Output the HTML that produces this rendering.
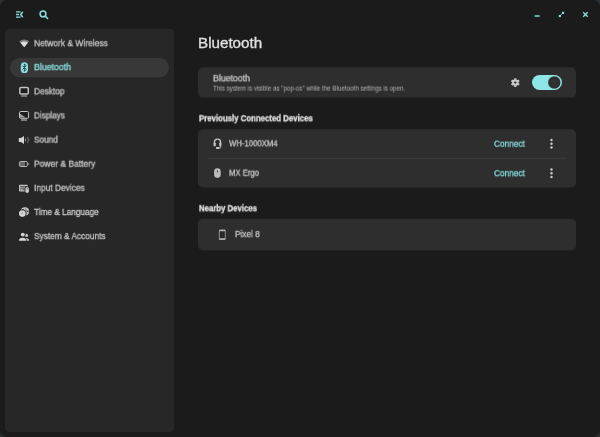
<!DOCTYPE html>
<html lang="en"><head><meta charset="utf-8"><title>Bluetooth - Settings</title>
<style>
html,body{margin:0;padding:0;background:#2c2f31;}
body{width:600px;height:437px;position:relative;overflow:hidden;font-family:"Liberation Sans",sans-serif;}
.t{margin:0;padding:0;border:0;background:none;font-family:inherit;text-decoration:none;display:block;position:absolute;white-space:pre;line-height:1;transform-origin:0 50%;will-change:transform;-webkit-text-stroke:0.3px currentColor;}
.box{position:absolute;}
svg{position:absolute;overflow:visible;}
</style></head><body>
<div class="box" style="left:0;top:0;width:600px;height:437px;background:#1b1b1b;border-radius:7px"></div>
<svg width="600" height="437" viewBox="0 0 600 437" style="left:0;top:0">
<rect x="5" y="28.8" width="169" height="403.1" rx="4.5" fill="#272727"/>
<rect x="10" y="58" width="159" height="19.2" rx="9.6" fill="#383838"/>
<rect x="198" y="67.3" width="378" height="30.3" rx="5" fill="#2e2e2e"/>
<rect x="198" y="129.2" width="378" height="58.2" rx="5" fill="#2e2e2e"/>
<rect x="208" y="157.9" width="358" height="0.8" fill="#414141"/>
<rect x="198" y="218.8" width="378" height="31.4" rx="5" fill="#2e2e2e"/>
<rect x="532" y="75" width="30" height="15" rx="7.5" fill="#8ee6e6"/>
<circle cx="554.3" cy="82.5" r="6.2" fill="#303030"/>
</svg>
<svg width="600" height="437" viewBox="0 0 600 437" style="left:0;top:0">
<!-- header: sidebar toggle -->
<g fill="#8adfe0">
<rect x="16" y="11.2" width="4.6" height="1.4" rx=".4"/>
<rect x="16" y="13.8" width="3.2" height="1.4" rx=".4"/>
<rect x="16" y="16.4" width="4.6" height="1.4" rx=".4"/>
</g>
<path d="M22.5 12.3 L20.7 14.5 L22.5 16.7" fill="none" stroke="#8adfe0" stroke-width="1.4" stroke-linecap="round" stroke-linejoin="round"/>
<!-- search -->
<circle cx="43" cy="13.9" r="2.9" fill="none" stroke="#8adfe0" stroke-width="1.5"/>
<path d="M45.2 16.2 L47.6 18.5" stroke="#8adfe0" stroke-width="1.6" stroke-linecap="round"/>
<!-- window controls -->
<rect x="534.6" y="15.3" width="5.2" height="1.5" rx=".5" fill="#84d6d7"/>
<g fill="#8adfe0"><rect x="558.8" y="15" width="2.1" height="2.1"/><rect x="562" y="11.8" width="2.1" height="2.1"/></g>
<path d="M559.8 16 L563 12.8" stroke="#8adfe0" stroke-width=".9"/>
<path d="M583.2 12.3 L587.7 16.7 M587.7 12.3 L583.2 16.7" stroke="#8adfe0" stroke-width="1.35"/>

<!-- wifi -->
<path d="M24.2 47.2 L19.2 41.3 Q24.2 37.6 29.2 41.3 Z" fill="#7d7d7d"/>
<path d="M24.2 47.2 L20.5 42.8 Q24.2 40.1 27.9 42.8 Z" fill="#dcdcdc"/>
<!-- bluetooth -->
<rect x="20.8" y="62.3" width="7.2" height="10.7" rx="3.6" fill="#8adfe0"/>
<path d="M22.5 65.7 L26.2 69.4 L24.4 71.3 L24.4 63.9 L26.2 65.8 L22.5 69.5" fill="none" stroke="#274546" stroke-width=".9" stroke-linejoin="round"/>
<!-- desktop -->
<rect x="19.8" y="87.5" width="8.5" height="6.5" rx="1.3" fill="#1f1f1f" stroke="#c4c4c4" stroke-width="1.5"/>
<rect x="21.1" y="95.3" width="5.9" height="1.5" rx=".3" fill="#909090"/>
<!-- displays -->
<rect x="19.5" y="111.5" width="9.1" height="6.8" rx="1.3" fill="#1f1f1f" stroke="#c4c4c4" stroke-width="1"/>
<path d="M20 113.8 L25.8 117.6 L20 117.6 Z" fill="#a0a0a0"/>
<rect x="21.1" y="119.2" width="5.9" height="1.5" rx=".3" fill="#9a9a9a"/>
<!-- sound -->
<path d="M18.8 138 L21 138 L24 136 L24 144 L21 142 L18.8 142 Z" fill="#d4d4d4"/>
<path d="M25 138.3 Q26.9 140 25 141.7 Z" fill="#bdbdbd"/>
<path d="M27.2 137.2 Q29.6 140 27.2 142.8" fill="none" stroke="#6f6f6f" stroke-width="1.1"/>
<!-- battery -->
<rect x="19.4" y="161.5" width="7.9" height="5" rx="1.2" fill="#1e1e1e"/>
<rect x="19.9" y="162" width="5.1" height="4" fill="#6a6a6a"/>
<rect x="19.4" y="161.5" width="7.9" height="5" rx="1.2" fill="none" stroke="#bcbcbc" stroke-width="1"/>
<path d="M27.9 162.9 L29.2 164 L27.9 165.1 Z" fill="#c4c4c4"/>
<!-- input devices -->
<rect x="19" y="184.7" width="8.8" height="6.7" rx="1" fill="#c4c4c4"/>
<path d="M20.2 186.6 H27 M20.2 188.2 H25 M20.2 189.8 H21.4 M22.4 189.8 H25" stroke="#303030" stroke-width=".8"/>
<rect x="24.7" y="186.3" width="4.9" height="7.3" rx="2.4" fill="#272727"/>
<rect x="25.4" y="187" width="3.5" height="6" rx="1.75" fill="#c8c8c8"/>
<rect x="26.9" y="187.9" width=".6" height="1.4" fill="#444"/>
<!-- time & language -->
<circle cx="24.9" cy="211.4" r="4.1" fill="#cdcdcd"/>
<ellipse cx="23.3" cy="209.9" rx="1.5" ry=".8" transform="rotate(25 23.3 209.9)" fill="#2a2a2a"/>
<circle cx="27.7" cy="211.4" r=".8" fill="#2a2a2a"/>
<path d="M25.6 208.2 Q26.6 210.5 26 214.5" fill="none" stroke="#4a4a4a" stroke-width=".7"/>
<circle cx="22.3" cy="213.6" r="4.1" fill="#272727"/>
<circle cx="22.3" cy="213.6" r="3.3" fill="#d8d8d8"/>
<path d="M22.3 211.7 V213.8 H21.2" fill="none" stroke="#7a7a7a" stroke-width=".6"/>
<!-- users -->
<circle cx="26.5" cy="235.4" r="1.6" fill="#c4c4c4"/>
<path d="M25.6 238 Q28.9 238 29.3 240.7 L26 240.7 Z" fill="#c4c4c4"/>
<circle cx="22.8" cy="234.8" r="2.7" fill="#272727"/>
<circle cx="22.8" cy="234.6" r="1.95" fill="#d6d6d6"/>
<path d="M18.1 241.4 C18.1 238.4 20 237 22.6 237 C25.2 237 27.1 238.4 27.1 241.4 Z" fill="#272727"/>
<path d="M18.8 240.8 C18.8 238.8 20.4 237.8 22.6 237.8 C24.8 237.8 26.4 238.8 26.4 240.8 Z" fill="#d6d6d6"/>

<!-- headset -->
<path d="M214.4 145 V142.2 A3.1 3.1 0 0 1 220.6 142.2 V145" fill="none" stroke="#c8c8c8" stroke-width="1.3"/>
<rect x="213.7" y="142.6" width="2" height="3.7" rx=".6" fill="#c8c8c8"/>
<rect x="219.3" y="142.6" width="2" height="3.7" rx=".6" fill="#c8c8c8"/>
<path d="M220.7 146 V147.9 H218" fill="none" stroke="#c8c8c8" stroke-width=".8"/>
<rect x="216" y="147" width="3.4" height="1.9" rx=".6" fill="#c8c8c8"/>
<!-- mouse -->
<rect x="214.1" y="168.3" width="6.6" height="9.6" rx="3.3" fill="#bdbdbd"/>
<rect x="216.95" y="170.3" width=".9" height="2.1" rx=".45" fill="#2e2e2e"/>
<!-- phone -->
<rect x="219.3" y="230.2" width="6" height="9.2" rx="1" fill="#282828" stroke="#a8a8a8" stroke-width=".8"/>
<rect x="219" y="229.8" width="6.6" height="1.5" rx=".7" fill="#b4b4b4"/>
<rect x="219" y="238.2" width="6.6" height="1.6" rx=".7" fill="#b4b4b4"/>
<!-- gear -->
<g transform="translate(515.3 82.6)" fill="#c8c8c8">
<circle r="3.1"/>
<g id="tooth"><rect x="-1.15" y="-4.4" width="2.3" height="2.4" rx=".5"/></g>
<rect x="-1.15" y="-4.4" width="2.3" height="2.4" rx=".5" transform="rotate(60)"/>
<rect x="-1.15" y="-4.4" width="2.3" height="2.4" rx=".5" transform="rotate(120)"/>
<rect x="-1.15" y="-4.4" width="2.3" height="2.4" rx=".5" transform="rotate(180)"/>
<rect x="-1.15" y="-4.4" width="2.3" height="2.4" rx=".5" transform="rotate(240)"/>
<rect x="-1.15" y="-4.4" width="2.3" height="2.4" rx=".5" transform="rotate(300)"/>
<circle r="1.15" fill="#2e2e2e"/>
</g>
<!-- kebab dots -->
<g fill="#cccccc">
<circle cx="551.5" cy="140" r="1.2"/><circle cx="551.5" cy="143.75" r="1.2"/><circle cx="551.5" cy="147.5" r="1.2"/>
<circle cx="551.5" cy="169.5" r="1.2"/><circle cx="551.5" cy="173.25" r="1.2"/><circle cx="551.5" cy="177" r="1.2"/>
</g>
</svg>

<nav>
<a class="t" style="left:34.2px;top:39.00px;font-size:9px;font-weight:400;color:#c8c8c8;transform:translateY(0.20px) scaleX(0.9399)">Network &amp; Wireless</a>
<a class="t" style="left:34.2px;top:63.00px;font-size:9px;font-weight:400;color:#8adfe0;transform:translateY(0.10px) scaleX(0.9755)">Bluetooth</a>
<a class="t" style="left:34.2px;top:87.00px;font-size:9px;font-weight:400;color:#c8c8c8;transform:translateY(0.30px) scaleX(0.9234)">Desktop</a>
<a class="t" style="left:34.2px;top:111.00px;font-size:9px;font-weight:400;color:#c8c8c8;transform:translateY(0.40px) scaleX(0.9055)">Displays</a>
<a class="t" style="left:34.2px;top:135.00px;font-size:9px;font-weight:400;color:#c8c8c8;transform:translateY(0.60px) scaleX(0.9143)">Sound</a>
<a class="t" style="left:34.2px;top:159.00px;font-size:9px;font-weight:400;color:#c8c8c8;transform:translateY(0.70px) scaleX(0.9426)">Power &amp; Battery</a>
<a class="t" style="left:34.2px;top:183.00px;font-size:9px;font-weight:400;color:#c8c8c8;transform:translateY(0.80px) scaleX(0.9316)">Input Devices</a>
<a class="t" style="left:34.2px;top:208.00px;font-size:9px;font-weight:400;color:#c8c8c8;transform:translateY(0.00px) scaleX(0.9135)">Time &amp; Language</a>
<a class="t" style="left:34.2px;top:232.00px;font-size:9px;font-weight:400;color:#c8c8c8;transform:translateY(0.10px) scaleX(0.9233)">System &amp; Accounts</a>
</nav>
<main>
<h1 class="t" style="left:198.4px;top:36.15px;font-size:14px;font-weight:400;color:#e0e0e0;transform:translateY(0.00px) scaleX(1.0850)">Bluetooth</h1>
<section>
<span class="t" style="left:213.0px;top:74.00px;font-size:9px;font-weight:400;color:#c8c8c8;transform:translateY(0.30px) scaleX(0.9729)">Bluetooth</span>
<p class="t" style="left:213.0px;top:85.00px;font-size:6.3px;font-weight:400;color:#b6b6b6;transform:translateY(0.60px) scaleX(0.9845);-webkit-text-stroke:0">This system is visible as &quot;pop-os&quot; while the Bluetooth settings is open.</p>
</section>
<section>
<h2 class="t" style="left:198.7px;top:114.00px;font-size:9px;font-weight:700;color:#e6e6e6;transform:translateY(0.30px) scaleX(0.8683)">Previously Connected Devices</h2>
<span class="t" style="left:229.2px;top:139.00px;font-size:9px;font-weight:400;color:#c8c8c8;transform:translateY(0.30px) scaleX(0.8597)">WH-1000XM4</span>
<span class="t" style="left:229.2px;top:168.00px;font-size:9px;font-weight:400;color:#c8c8c8;transform:translateY(0.70px) scaleX(0.8568)">MX Ergo</span>
<button class="t" style="left:494.2px;top:139.00px;font-size:9px;font-weight:400;color:#8adfe0;transform:translateY(0.70px) scaleX(0.9185)">Connect</button>
<button class="t" style="left:494.2px;top:169.00px;font-size:9px;font-weight:400;color:#8adfe0;transform:translateY(0.20px) scaleX(0.9185)">Connect</button>
</section>
<section>
<h2 class="t" style="left:198.7px;top:204.00px;font-size:9px;font-weight:700;color:#e6e6e6;transform:translateY(0.30px) scaleX(0.8651)">Nearby Devices</h2>
<span class="t" style="left:234.7px;top:230.00px;font-size:9px;font-weight:400;color:#c8c8c8;transform:translateY(0.10px) scaleX(0.9180)">Pixel 8</span>
</section>
</main>
</body></html>
